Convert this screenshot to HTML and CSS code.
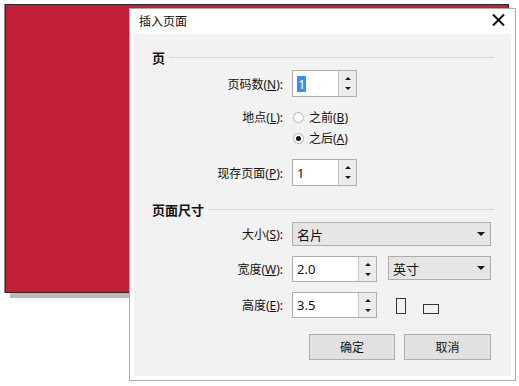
FILE: index.html
```html
<!DOCTYPE html>
<html lang="zh-CN">
<head>
<meta charset="UTF-8" />
<meta name="viewport" content="width=device-width, initial-scale=1.0" />
<title>插入页面</title>
<link rel="stylesheet" href="styles.css">
</head>
<body>

<div class="desk">
  <div class="page"></div>

  <div class="dialog">
    <div class="titlebar">
      <span class="title">插入页面</span>
      <svg class="close" width="13" height="12" viewBox="0 0 13 12">
        <path d="M1 0.5 L12 11.5 M12 0.5 L1 11.5" stroke="#111" stroke-width="2" fill="none"/>
      </svg>
    </div>

    <div class="body">
      <div class="panel">
        <div class="group-title"><span>页</span></div>

        <div class="row row-first">
          <label class="lbl">页码数(<u>N</u>):</label>
          <div class="spin spin-short tall">
            <span class="val"><span class="sel">1</span></span>
            <span class="arrows"><i class="up"></i><i class="down"></i></span>
          </div>
        </div>

        <div class="row row-radio1">
          <label class="lbl">地点(<u>L</u>):</label>
          <span class="radio"></span><span class="opt">之前(<u>B</u>)</span>
        </div>

        <div class="row row-radio2">
          <span class="lbl"></span>
          <span class="radio checked"></span><span class="opt">之后(<u>A</u>)</span>
        </div>

        <div class="row row-existing">
          <label class="lbl">现存页面(<u>P</u>):</label>
          <div class="spin spin-short tall">
            <span class="val">1</span>
            <span class="arrows"><i class="up"></i><i class="down"></i></span>
          </div>
        </div>

        <div class="group-title group-size"><span>页面尺寸</span></div>

        <div class="row row-size">
          <label class="lbl">大小(<u>S</u>):</label>
          <div class="select select-wide">
            <span>名片</span><i class="caret"></i>
          </div>
        </div>

        <div class="row row-dim">
          <label class="lbl">宽度(<u>W</u>):</label>
          <div class="spin spin-long">
            <span class="val">2.0</span>
            <span class="arrows"><i class="up"></i><i class="down"></i></span>
          </div>
          <div class="select select-unit">
            <span>英寸</span><i class="caret"></i>
          </div>
        </div>

        <div class="row row-dim">
          <label class="lbl">高度(<u>E</u>):</label>
          <div class="spin spin-long">
            <span class="val">3.5</span>
            <span class="arrows"><i class="up"></i><i class="down"></i></span>
          </div>
          <div class="orient">
            <span class="portrait"></span>
            <span class="landscape"></span>
          </div>
        </div>

        <div class="buttons">
          <button class="btn btn-ok">确定</button>
          <button class="btn btn-cancel">取消</button>
        </div>
      </div>
    </div>
  </div>
</div>

</body>
</html>
```

FILE: styles.css
```css
html, body {
  margin: 0;
  padding: 0;
  background: #fff;
}
body {
  font-family: "Noto Sans", "Noto Sans CJK SC", sans-serif;
  font-size: 12px;
  color: #111;
}
.desk {
  position: relative;
  width: 519px;
  height: 386px;
  overflow: hidden;
}
.page {
  position: absolute;
  left: 5px;
  top: 4px;
  width: 502px;
  height: 287px;
  background: #c41f39;
  border: 1px solid #2b2b2b;
  box-shadow: -1px 0 0 #8e8e8e, 5px 5px 0 #b9b9b9;
}
.dialog {
  position: absolute;
  left: 129px;
  top: 8px;
  width: 385px;
  height: 371px;
  background: #fff;
  border: 1px solid #ababab;
}
.titlebar {
  height: 25px;
  display: flex;
  align-items: center;
  justify-content: space-between;
  padding-left: 9px;
}
.title {
  line-height: 16px;
  padding-top: 1px;
}
.close {
  margin-right: 10px;
  margin-bottom: 3px;
}
.body {
  padding: 0 4px 4px;
}
.panel {
  height: 342px;
  background: #f2f2f2;
  padding: 14px 20px 0 18px;
  box-sizing: border-box;
}
.group-title {
  display: flex;
  align-items: center;
  height: 18px;
  margin-right: -3px;
  font-size: 13px;
  font-weight: bold;
}
.group-title::after {
  content: "";
  flex: 1;
  height: 1px;
  background: #d6d6d6;
  margin-left: 4px;
}
.group-size {
  margin-top: 14px;
}
.row {
  display: flex;
  align-items: center;
}
.lbl {
  width: 131px;
  margin-right: 9px;
  text-align: right;
  white-space: nowrap;
}
.row-first { margin-top: 4px; }
.row-radio1 { margin-top: 12px; height: 16px; }
.row-radio2 { margin-top: 5px; height: 16px; }
.row-existing { margin-top: 13px; }
.row-size { margin-top: 4px; }
.row-dim { margin-top: 10px; }

.spin {
  display: flex;
  height: 26px;
  background: #fff;
  border: 1px solid #adadad;
  box-sizing: border-box;
}
.spin.tall { height: 27px; }
.spin-short { width: 65px; }
.spin-long { width: 85px; }
.val {
  flex: 1;
  display: flex;
  align-items: center;
  padding-left: 4px;
  font-size: 13px;
}
.sel {
  background: #3390ff;
  color: #fff;
  padding: 0 1px;
  line-height: 16px;
}
.arrows {
  width: 17px;
  display: flex;
  flex-direction: column;
  background: #ececec;
  border-left: 1px solid #c8c8c8;
}
.arrows i {
  flex: 1;
  display: flex;
  align-items: center;
  justify-content: center;
}
.arrows i::before {
  content: "";
  border-left: 3px solid transparent;
  border-right: 3px solid transparent;
}
.arrows .up::before {
  border-bottom: 3px solid #1a1a1a;
  margin-top: 2px;
}
.arrows .down::before {
  border-top: 3px solid #1a1a1a;
  margin-bottom: 2px;
}

.radio {
  width: 9px;
  height: 9px;
  margin-left: 1px;
  border: 1px solid #b3b3b3;
  border-radius: 50%;
  background: #fff;
  display: flex;
  align-items: center;
  justify-content: center;
}
.radio.checked::before {
  content: "";
  width: 5px;
  height: 5px;
  border-radius: 50%;
  background: #111;
}
.opt {
  margin-left: 5px;
}

.select {
  height: 24px;
  display: flex;
  align-items: center;
  justify-content: space-between;
  background: #e5e5e5;
  border: 1px solid #adadad;
  box-sizing: border-box;
  padding: 0 5px 0 4px;
  font-size: 13px;
}
.select-wide { flex: 1; }
.select-unit {
  width: 103px;
  margin-left: 11px;
  align-self: flex-start;
}
.caret {
  border-left: 4px solid transparent;
  border-right: 4px solid transparent;
  border-top: 4px solid #1a1a1a;
}

.orient {
  display: flex;
  align-items: flex-end;
  margin-left: 19px;
  margin-top: 2px;
}
.portrait {
  width: 8px;
  height: 14px;
  border: 1px solid #333;
}
.landscape {
  width: 14px;
  height: 8px;
  border: 1px solid #333;
  margin-left: 17px;
}

.buttons {
  display: flex;
  justify-content: flex-end;
  gap: 9px;
  margin-top: 16px;
}
.btn {
  height: 26px;
  background: #e1e1e1;
  border: 1px solid #adadad;
  font-family: inherit;
  font-size: 12px;
  color: #111;
  padding: 0;
}
.btn-ok { width: 86px; }
.btn-cancel { width: 87px; }
```
